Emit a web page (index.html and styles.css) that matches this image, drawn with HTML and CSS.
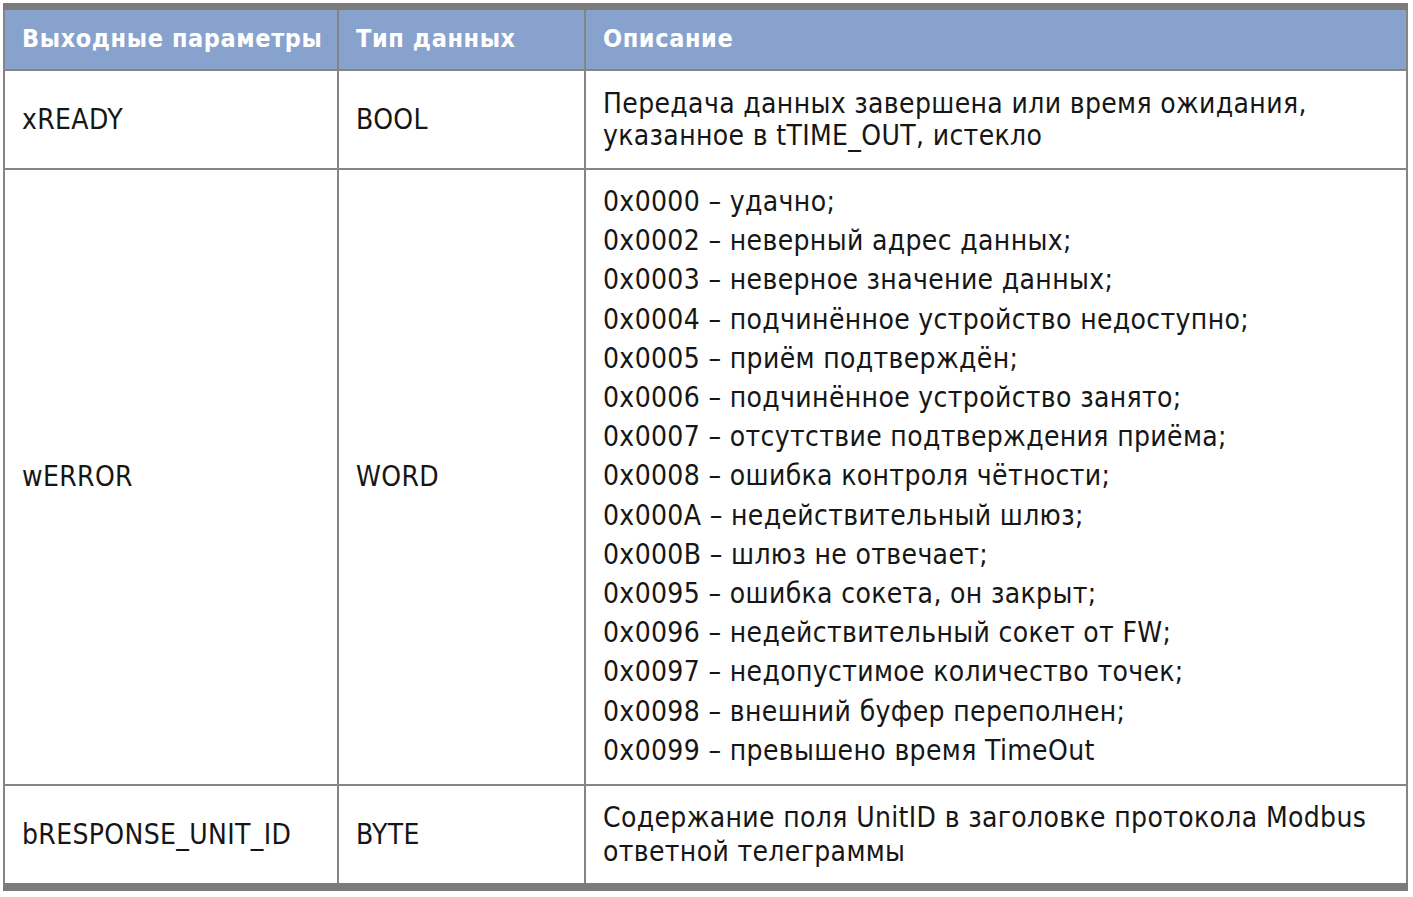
FILE: index.html
```html
<!DOCTYPE html>
<html lang="ru">
<head>
<meta charset="utf-8">
<title>Выходные параметры</title>
<link rel="stylesheet" href="styles.css">
</head>
<body>
<table class="params">
  <colgroup>
    <col class="c1">
    <col class="c2">
    <col class="c3">
  </colgroup>
  <thead>
    <tr class="head">
      <th>Выходные параметры</th>
      <th>Тип данных</th>
      <th>Описание</th>
    </tr>
  </thead>
  <tbody>
    <tr class="r1">
      <td>xREADY</td>
      <td>BOOL</td>
      <td class="desc">Передача данных завершена или время ожидания,<br>указанное в tTIME_OUT, истекло</td>
    </tr>
    <tr class="r2">
      <td>wERROR</td>
      <td>WORD</td>
      <td class="desc list">
        <div>0x0000 – удачно;</div>
        <div>0x0002 – неверный адрес данных;</div>
        <div>0x0003 – неверное значение данных;</div>
        <div>0x0004 – подчинённое устройство недоступно;</div>
        <div>0x0005 – приём подтверждён;</div>
        <div>0x0006 – подчинённое устройство занято;</div>
        <div>0x0007 – отсутствие подтверждения приёма;</div>
        <div>0x0008 – ошибка контроля чётности;</div>
        <div>0x000A – недействительный шлюз;</div>
        <div>0x000B – шлюз не отвечает;</div>
        <div>0x0095 – ошибка сокета, он закрыт;</div>
        <div>0x0096 – недействительный сокет от FW;</div>
        <div>0x0097 – недопустимое количество точек;</div>
        <div>0x0098 – внешний буфер переполнен;</div>
        <div>0x0099 – превышено время TimeOut</div>
      </td>
    </tr>
    <tr class="r3">
      <td>bRESPONSE_UNIT_ID</td>
      <td>BYTE</td>
      <td class="desc">Содержание поля UnitID в заголовке протокола Modbus<br>ответной телеграммы</td>
    </tr>
  </tbody>
</table>
</body>
</html>
```
FILE: styles.css
```css
html, body {
  margin: 0;
  background: #ffffff;
}
body {
  padding: 3px 0 0 3px;
}
.params {
  border-collapse: collapse;
  width: 1403px;
  table-layout: fixed;
  font-family: "DejaVu Sans Condensed", "DejaVu Sans", sans-serif;
  color: #161616;
  border-top: 7px solid #7b7b7b;
  border-bottom: 8px solid #7b7b7b;
  border-left: 2px solid #7b7b7b;
  border-right: 2px solid #7b7b7b;
}
.c1 { width: 334px; }
.c2 { width: 247px; }
.c3 { width: 822px; }
.params th,
.params td {
  border: 2px solid #858585;
  text-align: left;
  vertical-align: middle;
  padding: 0 16px 0 17px;
}
.head th {
  background: #87a2cd;
  color: #ffffff;
  font-weight: bold;
  font-size: 25px;
  letter-spacing: 0.6px;
  white-space: nowrap;
  overflow: hidden;
  height: 56px;
  padding-top: 0;
  padding-right: 4px;
  padding-bottom: 3px;
}
.params td {
  font-size: 28px;
  line-height: 32px;
  letter-spacing: 0.35px;
}
.r1 td { height: 97px; }
.r3 td { height: 97px; line-height: 34px; }
.list {
  padding-top: 12px !important;
  padding-bottom: 14px !important;
}
.list div {
  line-height: 39.2px;
}
```
